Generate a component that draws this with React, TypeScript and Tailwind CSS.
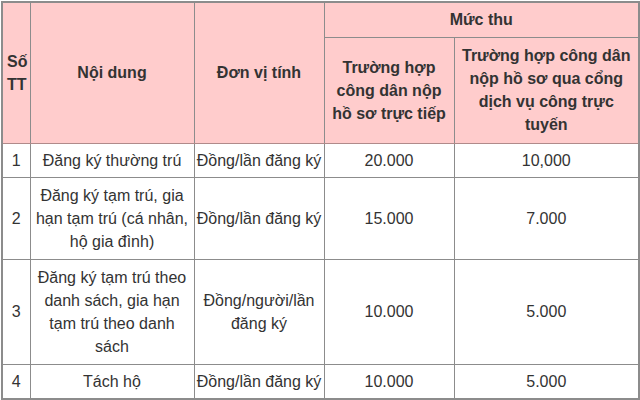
import React from "react";

const rows = [
  { no: "1", content: "Đăng ký thường trú", unit: "Đồng/lần đăng ký", direct: "20.000", online: "10,000", h: "h-[34px]" },
  { no: "2", content: "Đăng ký tạm trú, gia hạn tạm trú (cá nhân, hộ gia đình)", unit: "Đồng/lần đăng ký", direct: "15.000", online: "7.000", h: "h-[82px]" },
  { no: "3", content: "Đăng ký tạm trú theo danh sách, gia hạn tạm trú theo danh sách", unit: "Đồng/người/lần đăng ký", direct: "10.000", online: "5.000", h: "h-[105px]" },
  { no: "4", content: "Tách hộ", unit: "Đồng/lần đăng ký", direct: "10.000", online: "5.000", h: "h-[35px]" },
];

export default function App() {
  const cell = "border border-[#8c8c8c] text-center align-middle px-px py-0";
  return (
    <div className="w-[640px] h-[400px] bg-white pl-px pt-px font-['Liberation_Sans',Arial,sans-serif] text-[16px] leading-[23px] text-[#333]">
      <table className="table-fixed border-collapse w-[637px] border-2 border-[#8c8c8c]">
        <colgroup>
          <col className="w-[28px]" />
          <col className="w-[164px]" />
          <col className="w-[130px]" />
          <col className="w-[130px]" />
          <col className="w-[185px]" />
        </colgroup>
        <thead className="bg-[#ffcccc] font-bold">
          <tr className="h-[35px]">
            <th rowSpan={2} className={`${cell} text-left pl-[4px] border-b-[#b08a8a]`}>Số TT</th>
            <th rowSpan={2} className={`${cell} border-b-[#b08a8a]`}>Nội dung</th>
            <th rowSpan={2} className={`${cell} border-b-[#b08a8a]`}>Đơn vị tính</th>
            <th colSpan={2} className={cell}>Mức thu</th>
          </tr>
          <tr className="h-[106px]">
            <th className={`${cell} border-b-[#b08a8a]`}>Trường hợp công dân nộp hồ sơ trực tiếp</th>
            <th className={`${cell} border-b-[#b08a8a]`}>Trường hợp công dân nộp hồ sơ qua cổng dịch vụ công trực tuyến</th>
          </tr>
        </thead>
        <tbody>
          {rows.map((r) => (
            <tr key={r.no} className={r.h}>
              <td className={cell}>{r.no}</td>
              <td className={cell}>{r.content}</td>
              <td className={cell}>{r.unit}</td>
              <td className={cell}>{r.direct}</td>
              <td className={cell}>{r.online}</td>
            </tr>
          ))}
        </tbody>
      </table>
    </div>
  );
}
